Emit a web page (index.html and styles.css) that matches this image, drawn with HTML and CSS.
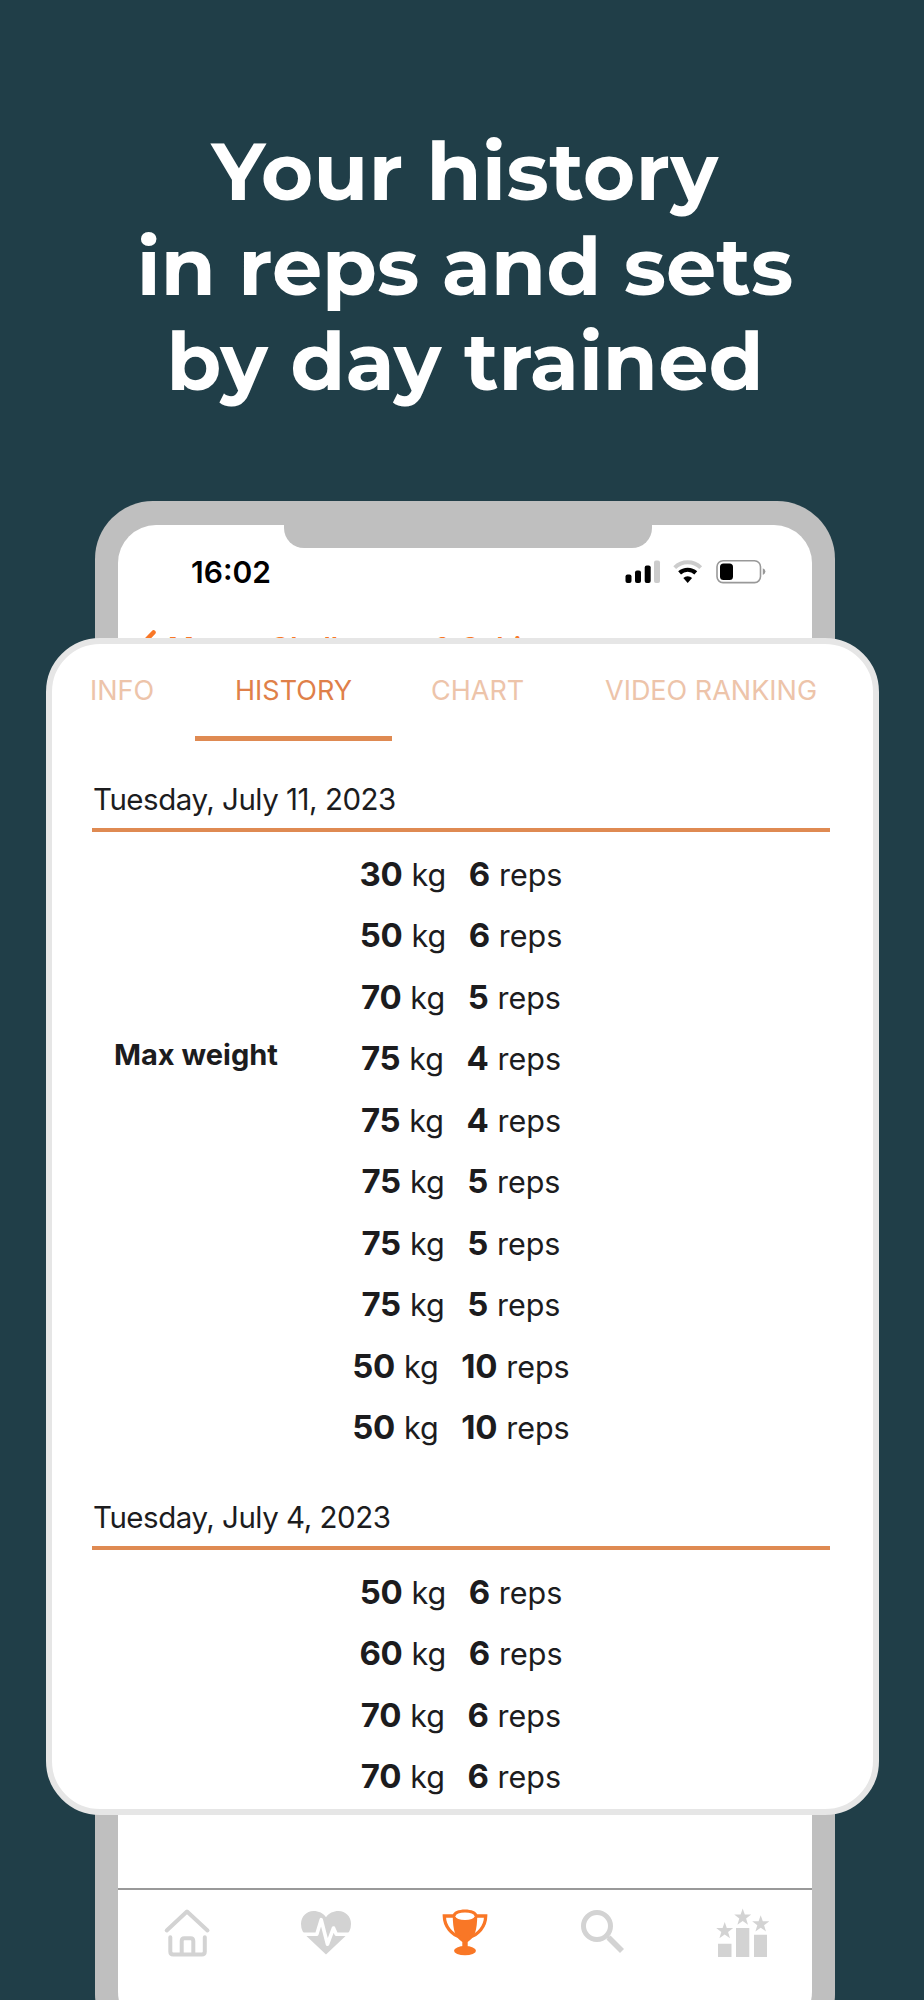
FILE: index.html
```
<!DOCTYPE html>
<html lang="en">

<head>
	<meta charset="utf-8">
	<title>Training history</title>
	<link rel="stylesheet" href="styles.css">
</head>

<body>

	<div class="stage">

		<h1>
			<span class="line first">Your history</span>
			<span class="line">in reps and sets</span>
			<span class="line">by day trained</span>
		</h1>

		<div class="phone">
			<div class="screen">
				<div class="notch"></div>

				<div class="status">
					<span class="time">16:02</span>
					<svg width="142" height="26" viewBox="0 0 142 26">
						<rect x="0.5" y="14.5" width="6" height="8.5" rx="2" />
						<rect x="10" y="10.5" width="6" height="12.5" rx="2" />
						<rect x="19.7" y="5.5" width="6" height="17.5" rx="2" />
						<rect x="29" y="0.5" width="6" height="22.5" rx="2" fill="#ccc" />
						<path d="M49.7 7.7a18.5 18.5 0 0 1 26 0" fill="none" stroke="#ccc" stroke-width="4" />
						<path d="M54.6 12.9a12 12 0 0 1 16.2 0" fill="none" stroke="#000" stroke-width="4.2" />
						<path d="M58.3 17.9a6.5 6.5 0 0 1 8.8 0l-4.4 5z" />
						<rect x="92" y="0.8" width="43.5" height="21.8" rx="6" fill="#fff" stroke="#999" stroke-width="1.6" />
						<rect x="95" y="3.5" width="13" height="16.4" rx="3.5" />
						<path d="M137.8 8.3q2.6 1 2.6 3.3t-2.6 3.3z" fill="#999" />
					</svg>
				</div>

				<div class="app-header">
					<svg width="16" height="28" viewBox="0 0 16 28">
						<path d="M13.5 2.5L2.5 14l11 11.5" fill="none" stroke="#f97726" stroke-width="4.5" stroke-linecap="round" />
					</svg>
					<span class="app-title">Master Challenge</span>
					<span class="app-title extra">&amp; Cabin</span>
				</div>

				<div class="tabbar">
					<svg width="54" height="54" viewBox="0 0 54 54" fill="none" stroke="#d3d3d3" stroke-width="4" stroke-linecap="round" stroke-linejoin="round">
						<path d="M6.7 24.5L27 5.5l20.5 19" />
						<path d="M10.3 31.3v14.2q0 3 3 3h28.5q3 0 3-3V31.3" />
						<path d="M21.7 48V35q0-2.700 2.700-2.700h6.200q2.700 0 2.700 2.700v13" />
					</svg>
					<svg width="54" height="54" viewBox="0 0 54 54">
						<path d="M27 48.500L8.500 31Q2 26 2 18C2 10.500 7.500 5 14.500 5c5.200 0 9.800 2.200 12.500 6.300C29.700 7.200 34.500 5 39.500 5 46.500 5 52 10.500 52 18q0 8-6.500 13z" fill="#d3d3d3" />
						<path d="M1 28.200h16.800l4.400-14.500 6.300 24.500 6-16.200 2.800 6.200H53" fill="none" stroke="#fff" stroke-width="3.600" stroke-linejoin="round" />
					</svg>
					<svg width="54" height="54" viewBox="0 0 54 54">
						<path d="M14.700 9.500C14.700 1.500 39.300 1.500 39.300 9.500" fill="#f97726" />
						<path d="M14.700 9C15 25 17 31 24.300 36v5h5.400v-5C37 31 39 25 39.300 9z" fill="#f97726" />
						<path d="M16 10H6.300C6.500 21 14 28.500 22 31M38 10h9.700C47.500 21 40 28.500 32 31" fill="none" stroke="#f97726" stroke-width="3.300" />
						<ellipse cx="27" cy="10.200" rx="9.500" ry="3.800" fill="#fff" />
						<ellipse cx="27" cy="44.700" rx="11" ry="4.600" fill="#f97726" />
					</svg>
					<svg width="54" height="54" viewBox="0 0 54 54" fill="none" stroke="#d3d3d3">
						<circle cx="21" cy="20" r="13.500" stroke-width="5" />
						<path d="M32.500 31.500L46 45" stroke-width="5.600" />
						<path d="M30 29l4 4" stroke-width="3" />
					</svg>
					<svg width="54" height="54" viewBox="0 0 54 54" fill="#d3d3d3">
						<path d="M3 37.700h13.500V51H3zM21 22h13.300v29H21zM39 28.700h13V51H39z" />
						<path id="star" d="M27.700 2.500l2.100 6 6.400.1-5.100 3.900 1.900 6.200-5.300-3.700-5.300 3.700 1.900-6.200-5.100-3.900 6.400-.1z" />
						<use href="#star" x="-18" y="13.500" />
						<use href="#star" x="18" y="6.700" />
					</svg>
				</div>
			</div>
		</div>

		<div class="card">
			<div class="tabs">
				<span class="tab-info">INFO</span>
				<span class="tab-history active">HISTORY</span>
				<span class="tab-chart">CHART</span>
				<span class="tab-video">VIDEO RANKING</span>
			</div>

			<div class="day">
				<h2>Tuesday, July 11, 2023</h2>
				<p><b>30</b><span>kg</span><b class="count">6</b><span>reps</span></p>
				<p><b>50</b><span>kg</span><b class="count">6</b><span>reps</span></p>
				<p><b>70</b><span>kg</span><b class="count">5</b><span>reps</span></p>
				<p><strong class="max">Max weight</strong><b>75</b><span>kg</span><b class="count">4</b><span>reps</span></p>
				<p><b>75</b><span>kg</span><b class="count">4</b><span>reps</span></p>
				<p><b>75</b><span>kg</span><b class="count">5</b><span>reps</span></p>
				<p><b>75</b><span>kg</span><b class="count">5</b><span>reps</span></p>
				<p><b>75</b><span>kg</span><b class="count">5</b><span>reps</span></p>
				<p><b>50</b><span>kg</span><b class="count">10</b><span>reps</span></p>
				<p><b>50</b><span>kg</span><b class="count">10</b><span>reps</span></p>
			</div>

			<div class="day">
				<h2>Tuesday, July 4, 2023</h2>
				<p><b>50</b><span>kg</span><b class="count">6</b><span>reps</span></p>
				<p><b>60</b><span>kg</span><b class="count">6</b><span>reps</span></p>
				<p><b>70</b><span>kg</span><b class="count">6</b><span>reps</span></p>
				<p><b>70</b><span>kg</span><b class="count">6</b><span>reps</span></p>
			</div>
		</div>

	</div>

</body>

</html>
```
FILE: styles.css
```
* {
	box-sizing: border-box;
}

body {
	margin: 0;
	background: #203e48;
	font-family: Inter, "Liberation Sans", sans-serif;
}

.stage {
	position: relative;
	width: 924px;
	height: 2000px;
	overflow: hidden;
}

h1 {
	margin: 0;
	padding-top: 124px;
	height: 501px;
	padding-left: 6px;
	color: #fff;
	font-family: Montserrat, Inter, sans-serif;
	font-size: 79.6px;
	font-weight: 700;
	line-height: 95px;
	text-align: center;
}

.line {
	display: block;
	white-space: nowrap;
}

.first {
	letter-spacing: .5px;
}

.phone {
	width: 740px;
	height: 1551px;
	margin-left: 95px;
	padding: 24px 23px 22px;
	border-radius: 58px;
	background: #bfbfbf;
}

.screen {
	display: flex;
	flex-direction: column;
	height: 1505px;
	border-radius: 38px;
	background: #fff;
	overflow: hidden;
}

.notch {
	width: 368px;
	height: 23px;
	margin-left: 166px;
	border-radius: 0 0 20px 20px;
	background: #bfbfbf;
}

.status {
	display: flex;
	justify-content: space-between;
	align-items: flex-start;
	height: 72px;
	padding: 12px 45px 0 73px;
}

.time {
	font-size: 30px;
	font-weight: 600;
	line-height: 24px;
}

.app-header {
	display: flex;
	height: 600px;
	padding: 10px 0 0 22px;
	color: #f97726;
}

.app-title {
	margin-left: 12px;
	font-size: 28px;
	font-weight: 600;
	line-height: 36px;
}

.app-title.extra {
	margin-left: 28px;
}

.tabbar {
	display: flex;
	justify-content: space-between;
	height: 142px;
	margin-top: auto;
	padding: 16px 43px 0 42px;
	border-top: 2px solid #999;
}

.card {
	position: absolute;
	top: 638px;
	left: 46px;
	width: 833px;
	height: 1177px;
	border: 6px solid #e6e6e6;
	border-radius: 54px;
	background: #fff;
	color: #1c1c1e;
	overflow: hidden;
}

.tabs {
	display: flex;
	height: 97px;
	padding-left: 38px;
	color: #edc4aa;
	font-size: 27px;
	line-height: 94px;
	white-space: nowrap;
}

.tab-info {
	width: 105px;
}

.tab-history {
	width: 197px;
	border-bottom: 5px solid #df8a52;
	text-align: center;
}

.tab-chart {
	width: 173px;
	padding-left: 39px;
}

.tab-video {
	padding-left: 40px;
}

.active {
	color: #df8049;
}

.day {
	height: 718px;
	padding: 40px 43px 0 40px;
}

h2 {
	height: 51px;
	margin: 0 0 12.5px;
	padding-left: 1px;
	border-bottom: 4px solid #df8a52;
	font-size: 29.5px;
	font-weight: 400;
	letter-spacing: -.48px;
	line-height: 37px;
}

.day p {
	position: relative;
	display: flex;
	justify-content: center;
	align-items: baseline;
	height: 61.5px;
	margin: 0;
	font-size: 30.5px;
	line-height: 58px;
}

.day b {
	margin-right: 9px;
	font-size: 33px;
	font-weight: 700;
	letter-spacing: -.3px;
}

.day .count {
	margin-left: 22.5px;
}

.max {
	position: absolute;
	top: -3px;
	left: 22px;
	font-size: 29px;
	font-weight: 700;
}
```
